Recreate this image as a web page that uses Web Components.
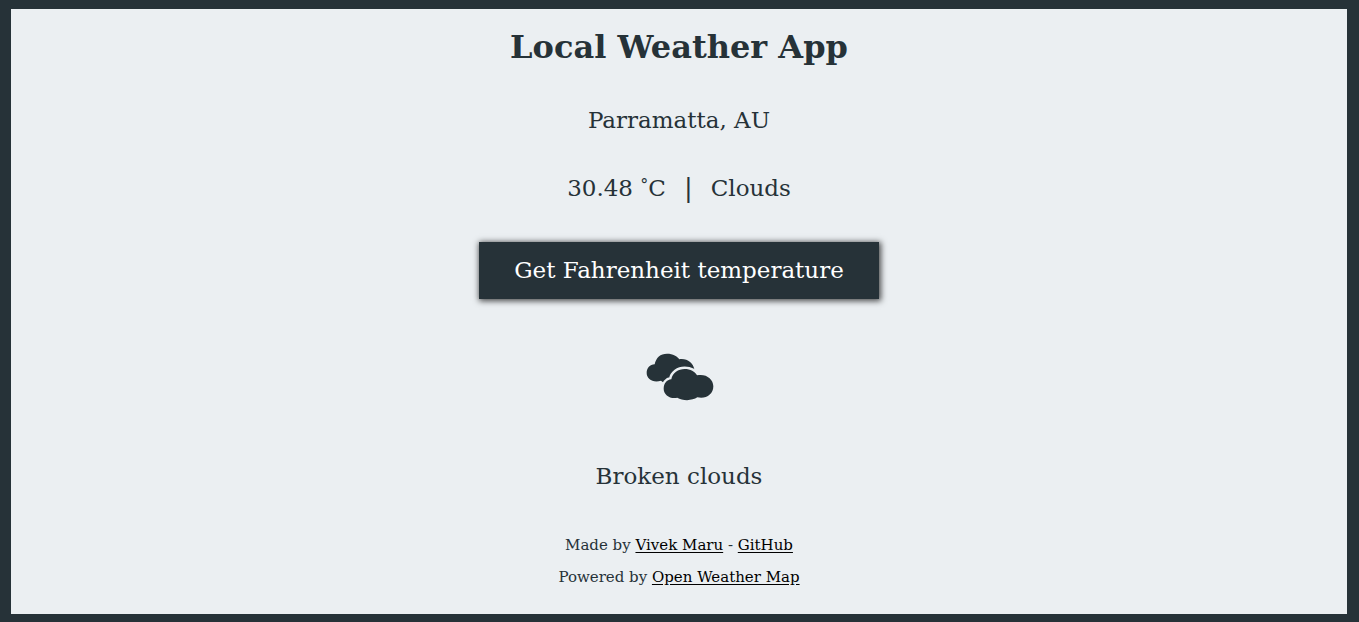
<!DOCTYPE html>
<html lang="en">
<head>
<meta charset="utf-8">
<title>Local Weather App</title>
<style>
  body { margin: 0; background: #263238; color: #263238; font-family: "DejaVu Serif", serif; }
</style>
</head>
<body>
<weather-app></weather-app>
<script>
class WeatherReading extends HTMLElement {
  constructor() {
    super();
    this.attachShadow({ mode: "open" }).innerHTML = `
      <style>
        :host { display: block; }
        p { display: flex; gap: 18px; margin: 0; font-size: 23px; line-height: 32px; }
        ::slotted(.bar) { font-size: 26px; }
      </style>
      <p><slot></slot></p>`;
  }
}
class UnitButton extends HTMLElement {
  constructor() {
    super();
    this.attachShadow({ mode: "open" }).innerHTML = `
      <style>
        :host { display: block; }
        button {
          min-width: 400px; padding: 12px 32px; border: 0;
          background: #263238; color: #fff; cursor: pointer;
          font-family: inherit; font-size: 23px; line-height: 33px;
          box-shadow: 1px 1px 6px 1px rgba(0, 0, 0, 0.7);
        }
      </style>
      <button type="button"><slot></slot></button>`;
  }
}
class CloudIcon extends HTMLElement {
  constructor() {
    super();
    this.attachShadow({ mode: "open" }).innerHTML = `
      <style>
        :host { display: block; }
        svg { display: block; width: 100px; height: 75px; fill: #263238; }
        .front { stroke: #ebeff2; stroke-width: 15; paint-order: stroke; }
      </style>
      <svg viewBox="-2 0 300 225" role="img" aria-label="Broken clouds">
        <path d="M75 73C79 53 92 41 112 41C130 41 143 49 149 58C171 54 191 69 194 88L185 100L125 125L102 128L94 122C70 130 51 116 51 99C51 84 61 74 75 73Z"/>
        <path class="front" d="M125 118C128 99 146 87 165 87C182 87 196 95 202 106C228 100 251 116 251 139C251 164 228 178 203 172C188 183 158 183 143 173C122 178 102 165 102 146C102 130 111 120 125 118Z"/>
      </svg>`;
  }
}
class PageCredits extends HTMLElement {
  constructor() {
    super();
    this.attachShadow({ mode: "open" }).innerHTML = `
      <style>
        :host { display: block; font-size: 15px; line-height: 32px; text-align: center; }
        p { margin: 0; }
        a { color: #000; text-underline-offset: 2px; }
      </style>
      <footer>
        <p>Made by <a href="#author">Vivek Maru</a> - <a href="#github">GitHub</a></p>
        <p>Powered by <a href="#openweathermap">Open Weather Map</a></p>
      </footer>`;
  }
}
class WeatherApp extends HTMLElement {
  constructor() {
    super();
    this.attachShadow({ mode: "open" }).innerHTML = `
      <style>
        :host { display: flex; box-sizing: border-box; min-height: 100vh; padding: 9px 12px 8px 11px; }
        main {
          flex: 1; display: flex; flex-direction: column; align-items: center;
          padding: 18px 0 16px; background: #ebeff2;
        }
        h1 { margin: 0 0 37px; font-size: 32px; line-height: 40px; }
        .city { margin-bottom: 36px; }
        .now { margin-bottom: 38px; }
        .degree { font-size: 16px; vertical-align: 6px; line-height: 1; }
        unit-button { margin-bottom: 41px; }
        cloud-icon { margin-bottom: 45px; }
        page-credits { margin-top: 37px; }
      </style>
      <main>
        <h1>Local Weather App</h1>
        <weather-reading class="city">Parramatta, AU</weather-reading>
        <weather-reading class="now"><span>30.48 <span class="degree">°</span>C</span><span class="bar">|</span><span>Clouds</span></weather-reading>
        <unit-button>Get Fahrenheit temperature</unit-button>
        <cloud-icon></cloud-icon>
        <weather-reading>Broken clouds</weather-reading>
        <page-credits></page-credits>
      </main>`;
  }
}
customElements.define("weather-reading", WeatherReading);
customElements.define("unit-button", UnitButton);
customElements.define("cloud-icon", CloudIcon);
customElements.define("page-credits", PageCredits);
customElements.define("weather-app", WeatherApp);
</script>
</body>
</html>
